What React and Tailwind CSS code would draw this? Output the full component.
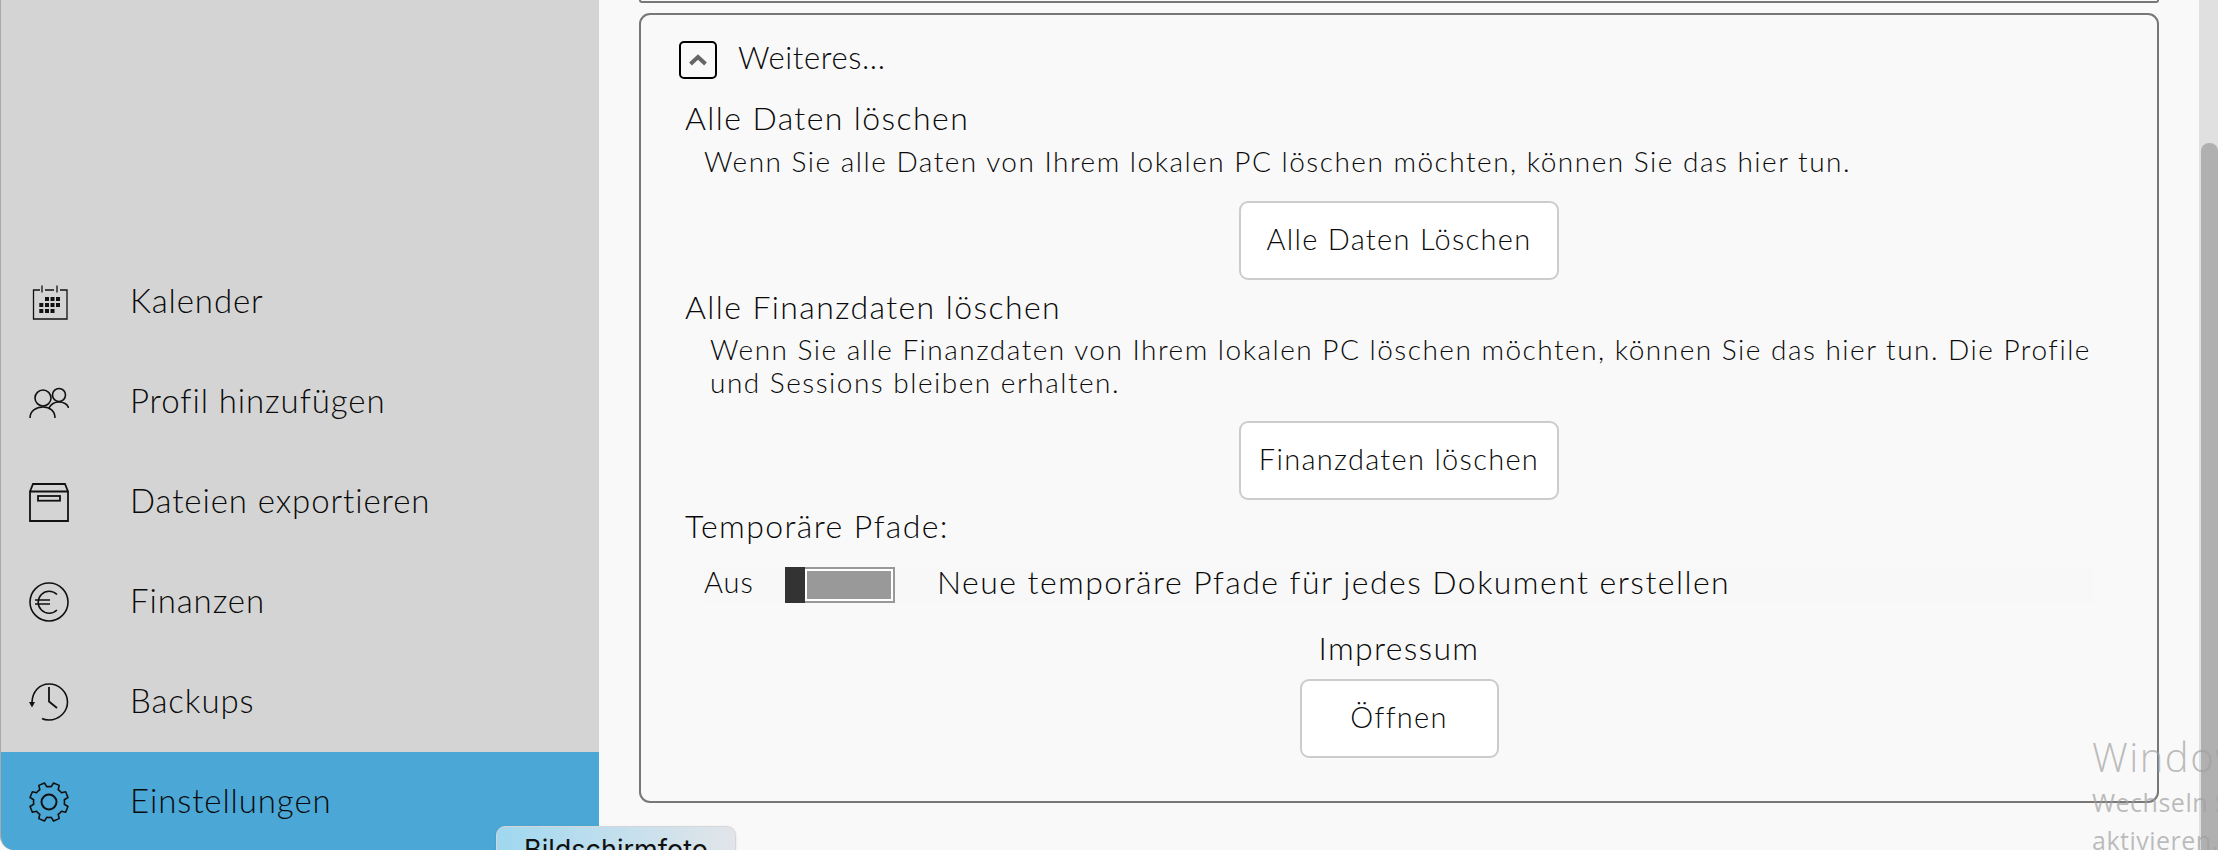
const FONT = "font-['Lato',sans-serif] font-light"

function Icon({ children }) {
  return (
    <svg width="40" height="40" viewBox="0 0 40 40" fill="none" stroke="#111" strokeWidth="1.6">
      {children}
    </svg>
  )
}

const CALENDAR_DOTS = [
  [16, 15], [21.500, 15], [27, 15],
  [10.300, 21], [16, 21], [21.500, 21], [27, 21],
  [10.300, 27], [16, 27], [21.500, 27],
]

const CalendarIcon = () => (
  <Icon>
    <path d="M11 8H4.500v29h33.500V8H31M16 8h9M13 3.500v7M28 3.500v7" strokeWidth="1.3" />
    <g fill="#111" stroke="none">
      {CALENDAR_DOTS.map(([x, y]) => (
        <rect key={`${x}-${y}`} x={x} y={y} width="4" height="4" />
      ))}
    </g>
  </Icon>
)

const PeopleIcon = () => (
  <Icon>
    <circle cx="14" cy="16" r="8" />
    <circle cx="30" cy="13" r="6.500" />
    <path d="M1 36c0-7 6-11 13-11s12 4 12 11M20 26c2-4 6-6 10-6s9 2 9.500 6" />
  </Icon>
)

const BoxIcon = () => (
  <Icon>
    <path d="M1 9.500h38V39H1zM1 9.500 4 2h32l3 7.500" strokeWidth="1.8" />
    <rect x="9" y="14" width="22" height="4.700" strokeWidth="1.8" />
  </Icon>
)

const EuroIcon = () => (
  <Icon>
    <circle cx="20" cy="20" r="19" />
    <path d="M28 12.500A11 11 0 1 0 28 28M6 18h15M6 22h15" />
  </Icon>
)

const ClockIcon = () => (
  <Icon>
    <path d="M3 20C3.500 10 10 2 20 2c10 0 18.500 8 18.500 18S30 38 20 38c-2.500 0-5-.3-7-1.500" />
    <path d="M20 5v14.500l8 6.500" strokeWidth="1.800" />
    <path d="M0 20h6l-3 5.500z" fill="#111" stroke="none" />
  </Icon>
)

// 8 teeth, with a notch on each axis
function gearPath() {
  const pts = []
  for (let i = 0; i < 8; i++) {
    const c = (i * 45 + 22.5) * Math.PI / 180
    const at = (r, d) => {
      const a = c + d * Math.PI / 180
      return `${(20 + r * Math.cos(a)).toFixed(2)} ${(20 + r * Math.sin(a)).toFixed(2)}`
    }
    pts.push(at(15.5, -22.5), at(15.5, -14), at(19.5, -9), at(19.5, 9), at(15.5, 14))
  }
  return `M${pts.join('L')}Z`
}

const GearIcon = () => (
  <Icon>
    <circle cx="20" cy="20" r="7.500" strokeWidth="2" />
    <path d={gearPath()} strokeLinejoin="round" />
  </Icon>
)

const NAV = [
  { label: 'Kalender', icon: CalendarIcon },
  { label: 'Profil hinzufügen', icon: PeopleIcon },
  { label: 'Dateien exportieren', icon: BoxIcon },
  { label: 'Finanzen', icon: EuroIcon },
  { label: 'Backups', icon: ClockIcon },
  { label: 'Einstellungen', icon: GearIcon, active: true },
]

function Sidebar() {
  return (
    <aside className="w-[599px] h-[850px] shrink-0 flex flex-col overflow-hidden bg-[#d4d4d4] border-l border-[#aaaaaa] rounded-bl-[14px]">
      <div className="h-[252px] shrink-0" />
      {NAV.map(({ label, icon: NavIcon, active }) => (
        <div
          key={label}
          className={`h-[100px] shrink-0 flex items-center pl-[28px] ${active ? 'bg-[#4ba7d6]' : ''}`}
        >
          <NavIcon />
          <span className={`${FONT} ml-[61px] pb-[2px] text-[33px] tracking-[0.9px] text-[#0a0a0a]`}>{label}</span>
        </div>
      ))}
    </aside>
  )
}

function Title({ children, className = '' }) {
  return <h3 className={`${FONT} h-[40px] leading-[38px] text-[32px] tracking-[1.4px] text-[#0a0a0a] ${className}`}>{children}</h3>
}

function ActionButton({ children, className = '' }) {
  return (
    <div className="flex justify-center">
      <button className={`${FONT} h-[79px] pb-[4px] bg-white border-2 border-[#cccccc] rounded-[9px] text-[29px] tracking-[1.3px] text-[#0a0a0a] ${className}`}>
        {children}
      </button>
    </div>
  )
}

function Panel() {
  return (
    <section className="h-[790px] border-2 border-[#777777] rounded-[11px] px-[44px] pt-[26px]">
      <div className="flex items-center h-[38px] -ml-[6px]">
        <span className="w-[38px] h-[38px] border-2 border-black rounded-[5px] flex items-center justify-center">
          <svg width="18" height="12" viewBox="0 0 18 12" fill="none" stroke="#666" strokeWidth="4">
            <path d="M1.500 10 9 3l7.500 7" />
          </svg>
        </span>
        <span className={`${FONT} ml-[21px] pb-[5px] text-[31px] tracking-[0.6px] text-[#0a0a0a]`}>Weiteres...</span>
      </div>

      <Title className="mt-[20px]">Alle Daten löschen</Title>
      <p className={`${FONT} ml-[19px] mt-[6px] leading-[33px] text-[28px] tracking-[1.5px] text-[#0a0a0a]`}>
        Wenn Sie alle Daten von Ihrem lokalen PC löschen möchten, können Sie das hier tun.
      </p>
      <div className="mt-[23px]"><ActionButton className="w-[320px]">Alle Daten Löschen</ActionButton></div>

      <Title className="mt-[8px]">Alle Finanzdaten löschen</Title>
      <p className={`${FONT} ml-[25px] mr-[20px] mt-[5px] leading-[33px] text-[28px] tracking-[1.5px] text-[#0a0a0a]`}>
        Wenn Sie alle Finanzdaten von Ihrem lokalen PC löschen möchten, können Sie das hier tun. Die Profile und Sessions bleiben erhalten.
      </p>
      <div className="mt-[22px]"><ActionButton className="w-[320px]">Finanzdaten löschen</ActionButton></div>

      <Title className="mt-[7px]">Temporäre Pfade:</Title>
      <div className="mt-[20px] ml-[19px] mr-[19px] h-[36px] flex items-center bg-[#f8f8f8]">
        <span className={`${FONT} pb-[6px] text-[29px] tracking-[1px] text-[#0a0a0a] w-[81px]`}>Aus</span>
        <span className="w-[110px] h-[36px] flex border-2 border-[#999999] bg-white">
          <span className="w-[20px] -my-[2px] -ml-[2px] bg-[#333333] shrink-0" />
          <span className="flex-1 m-[2px] bg-[#999999]" />
        </span>
        <span className={`${FONT} ml-[42px] pb-[6px] text-[32px] tracking-[1.45px] text-[#0a0a0a]`}>Neue temporäre Pfade für jedes Dokument erstellen</span>
      </div>

      <p className={`${FONT} mt-[27px] h-[40px] leading-[36px] text-center text-[32px] tracking-[1.3px] text-[#0a0a0a]`}>Impressum</p>
      <div className="mt-[9px]"><ActionButton className="w-[199px]">Öffnen</ActionButton></div>
    </section>
  )
}

export default function App() {
  return (
    <div className="relative flex w-[2218px] h-[850px] overflow-hidden bg-[#f9f9f9]">
      <Sidebar />
      <main className="flex-1 pl-[40px] pr-[40px]">
        <div className="h-[3px] border-b-2 border-x-2 border-[#777777] rounded-b-[8px]" />
        <div className="mt-[10px]"><Panel /></div>
      </main>
      <div className="w-[19px] shrink-0 flex flex-col bg-[#e0e0e0]">
        <div className="mt-[143px] flex-1 ml-[2px] bg-[#b0b0b0] rounded-t-[8px]" />
      </div>

      {/* taskbar tooltip, cut off by the screenshot */}
      <div className="absolute left-[496px] top-[826px] w-[240px] h-[40px] rounded-t-[9px] border border-[#d6d6d6] bg-gradient-to-r from-[#9fd8f0] to-[#e2e5e9] shadow text-center font-['Inter',sans-serif] text-[27px] leading-[46px] text-[#111]">
        Bildschirmfoto
      </div>

      {/* windows activation watermark */}
      <div className="absolute left-[2092px] top-[731px] whitespace-nowrap pointer-events-none font-['Open_Sans',sans-serif] text-[#a0a0a0]/70">
        <p className="text-[40px] leading-[52px] font-light tracking-[1.5px]">Windows aktivieren</p>
        <p className="text-[25px] leading-[38px] tracking-[0.5px]">Wechseln Sie zu den Einstellungen</p>
        <p className="text-[25px] leading-[38px] tracking-[0.5px]">aktivieren.</p>
      </div>
    </div>
  )
}
